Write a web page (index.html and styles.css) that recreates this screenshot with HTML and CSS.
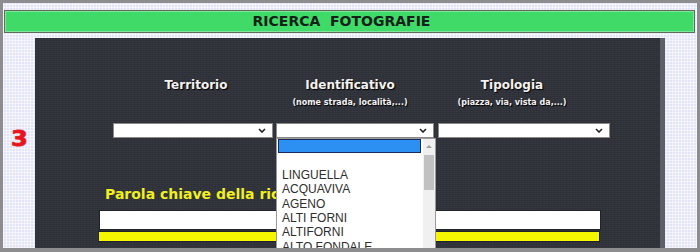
FILE: index.html
```html
<!DOCTYPE html>
<html lang="it">
<head>
<meta charset="utf-8">
<title>Ricerca fotografie</title>
<link rel="stylesheet" href="styles.css">
</head>
<body>
<div class="frame">
  <div class="title-bar">RICERCA&nbsp; FOTOGRAFIE</div>
  <div class="side side-left"><span class="step">3</span></div>
  <div class="panel">
    <div class="heads">
      <div class="head"><div class="h-title">Territorio</div></div>
      <div class="head"><div class="h-title">Identificativo</div><div class="h-sub">(nome strada, località,...)</div></div>
      <div class="head"><div class="h-title">Tipologia</div><div class="h-sub">(piazza, via, vista da,...)</div></div>
    </div>
    <div class="selects">
      <div class="select s1"><svg class="chev" width="8" height="5" viewBox="0 0 8 5"><path d="M1 1 L4 4 L7 1" fill="none" stroke="#222" stroke-width="1.6"/></svg></div>
      <div class="select s2"><svg class="chev" width="8" height="5" viewBox="0 0 8 5"><path d="M1 1 L4 4 L7 1" fill="none" stroke="#222" stroke-width="1.6"/></svg>
        <div class="dropdown">
          <div class="list">
            <div class="opt opt-sel"></div>
            <div class="opt"></div>
            <div class="opt">LINGUELLA</div>
            <div class="opt">ACQUAVIVA</div>
            <div class="opt">AGENO</div>
            <div class="opt">ALTI FORNI</div>
            <div class="opt">ALTIFORNI</div>
            <div class="opt">ALTO FONDALE</div>
          </div>
          <div class="scroll"><span class="arrow"></span><span class="thumb"></span></div>
        </div>
      </div>
      <div class="select s3"><svg class="chev" width="8" height="5" viewBox="0 0 8 5"><path d="M1 1 L4 4 L7 1" fill="none" stroke="#222" stroke-width="1.6"/></svg></div>
    </div>
    <div class="keyword">Parola chiave della ricerca</div>
    <div class="input"></div>
    <div class="bar"></div>
  </div>
  <div class="side side-right"></div>
</div>
</body>
</html>
```

FILE: styles.css
```css
html, body {
  margin: 0;
  padding: 0;
}
body {
  width: 700px;
  height: 252px;
  background: #8d8d8f;
  overflow: hidden;
}
.frame {
  margin: 3px 3px 0 3px;
  height: 245px;
  overflow: hidden;
  display: grid;
  grid-template-columns: 32px 1fr 32px;
  grid-template-rows: 30px 1fr;
  background-color: #e3e4f7;
  background-image:
    repeating-linear-gradient(0deg, rgba(255,255,255,0.55) 0 1px, transparent 1px 3px),
    repeating-linear-gradient(90deg, rgba(255,255,255,0.55) 0 1px, transparent 1px 3px);
}
.title-bar {
  grid-column: 1 / 4;
  margin: 7px 2px 0 1px;
  height: 21px;
  background: #3fda67;
  border: 1px solid #5e6b58;
  box-shadow: inset 0 0 0 1px #7fe59a;
  font-family: "DejaVu Sans", Verdana, sans-serif;
  font-weight: bold;
  font-size: 14px;
  line-height: 21px;
  color: #15201a;
  text-align: center;
  padding-right: 16px;
}
.side-left {
  padding: 95px 0 0 8px;
}
.step {
  display: inline-block;
  font-family: "DejaVu Sans", sans-serif;
  font-weight: 900;
  font-size: 22px;
  line-height: 22px;
  color: #e8141c;
  -webkit-text-stroke: 0.8px #e8141c;
  transform: scaleX(1.1);
  transform-origin: left center;
}
.panel {
  margin-top: 5px;
  background-color: #30323a;
  background-image:
    repeating-linear-gradient(0deg, rgba(255,255,255,0.025) 0 1px, transparent 1px 2px),
    repeating-linear-gradient(90deg, rgba(0,0,0,0.06) 0 1px, transparent 1px 3px);
  border-right: 5px solid #5d5f66;
  font-family: "DejaVu Sans", Verdana, sans-serif;
  padding-top: 40px;
}
.heads {
  display: grid;
  grid-template-columns: 166px 142px 182px;
  padding-left: 78px;
  height: 30px;
}
.head {
  text-align: center;
  color: #f2f2f2;
  font-weight: bold;
  text-shadow: 1px 1px 1px #000;
}
.h-title {
  font-size: 12px;
  line-height: 14px;
}
.h-sub {
  margin-top: 6px;
  font-size: 8px;
  line-height: 10px;
  white-space: nowrap;
}
.selects {
  display: flex;
  margin: 15px 0 0 78px;
}
.select {
  position: relative;
  height: 13px;
  background: #fff;
  border: 1px solid #8a8a8a;
  box-sizing: content-box;
}
.s1 { width: 158px; }
.s2 { width: 156px; margin-left: 3px; }
.s3 { width: 170px; margin-left: 4px; }
.chev {
  position: absolute;
  right: 6px;
  top: 4px;
}
.dropdown {
  position: absolute;
  left: -1px;
  top: 14px;
  width: 158px;
  height: 130px;
  background: #fff;
  border: 1px solid #9a9a9a;
  display: flex;
  z-index: 5;
}
.list {
  flex: 1;
  padding: 0 2px 0 1px;
  font-family: "Liberation Sans", Arial, sans-serif;
  font-size: 12px;
  color: #2e2e2e;
}
.opt {
  height: 14.4px;
  line-height: 14.4px;
  padding-left: 4px;
  white-space: nowrap;
}
.opt-sel {
  background: #2c8ff2;
  border: 1px solid #1a2a5a;
  height: 12.4px;
}
.scroll {
  width: 12px;
  background: #f0f0f0;
  position: relative;
}
.arrow {
  position: absolute;
  left: 3px;
  top: 6px;
  width: 0;
  height: 0;
  border-left: 3px solid transparent;
  border-right: 3px solid transparent;
  border-bottom: 3px solid #a0a0a0;
}
.thumb {
  position: absolute;
  left: 1px;
  top: 16px;
  width: 10px;
  height: 35px;
  background: #c1c1c1;
}
.keyword {
  margin: 48px 0 0 70px;
  font-size: 14px;
  line-height: 17px;
  font-weight: bold;
  color: #f0f01e;
  white-space: nowrap;
}
.input {
  margin: 8px 0 0 65px;
  width: 500px;
  height: 18px;
  background: #fff;
  box-shadow: 0 0 0 1px #202228;
}
.bar {
  margin: 3px 0 0 64px;
  width: 500px;
  height: 9px;
  background: #f6f600;
  box-shadow: 0 0 0 1px #202228;
}
```
